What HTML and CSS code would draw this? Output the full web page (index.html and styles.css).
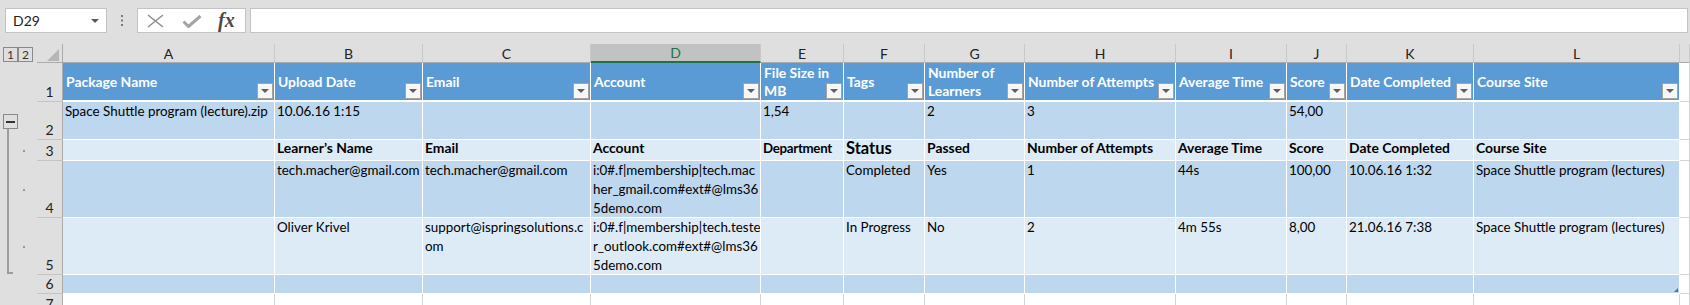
FILE: index.html
```html
<!DOCTYPE html>
<html lang="en">
<head>
    <meta charset="UTF-8">
    <meta name="viewport" content="width=device-width, initial-scale=1.0">
    <title>Learners report</title>
    <link rel="stylesheet" href="styles.css">
</head>
<body>
    <!-- Formula Bar -->
    <div class="formula-bar">
        <div class="name-box">
            <span>D29</span>
            <span class="name-arrow"></span>
        </div>
        <div class="bar-grip">
            <svg width="2" height="11" viewBox="0 0 2 11">
                <rect x="0" y="0" width="2" height="2" fill="#7a7a7a"></rect>
                <rect x="0" y="4.5" width="2" height="2" fill="#7a7a7a"></rect>
                <rect x="0" y="9" width="2" height="2" fill="#7a7a7a"></rect>
            </svg>
        </div>
        <div class="bar-buttons">
            <svg class="icon-cancel" width="17" height="14" viewBox="0 0 17 14" fill="none" stroke="#8f8f8f" stroke-width="1.6">
                <path d="M1 1l15 12M16 1L1 13"></path>
            </svg>
            <svg class="icon-enter" width="20" height="13" viewBox="0 0 20 13" fill="none" stroke="#a3a3a3" stroke-width="3" stroke-linejoin="miter">
                <path d="M1.5 6.5l5 5L18.5 1"></path>
            </svg>
            <span class="icon-fx">fx</span>
        </div>
        <div class="formula-input"></div>
    </div>

    <!-- Sheet -->
    <div class="sheet">
        <div class="row">
            <div class="ol ol-levels">
                <span class="level">1</span>
                <span class="level">2</span>
            </div>
            <div class="corner"><span class="corner-mark"></span></div>
            <div class="ch">A</div>
            <div class="ch">B</div>
            <div class="ch">C</div>
            <div class="ch sel">D</div>
            <div class="ch">E</div>
            <div class="ch">F</div>
            <div class="ch">G</div>
            <div class="ch">H</div>
            <div class="ch">I</div>
            <div class="ch">J</div>
            <div class="ch">K</div>
            <div class="ch">L</div>
            <div class="ch"></div>
        </div>

        <div class="row r-head">
            <div class="ol"></div>
            <div class="rh">1</div>
            <div class="c">Package Name<span class="filter"></span></div>
            <div class="c">Upload Date<span class="filter"></span></div>
            <div class="c">Email<span class="filter"></span></div>
            <div class="c">Account<span class="filter"></span></div>
            <div class="c">File Size in<br>MB<span class="filter"></span></div>
            <div class="c">Tags<span class="filter"></span></div>
            <div class="c">Number of<br>Learners<span class="filter"></span></div>
            <div class="c">Number of Attempts<span class="filter"></span></div>
            <div class="c">Average Time<span class="filter"></span></div>
            <div class="c">Score<span class="filter"></span></div>
            <div class="c">Date Completed<span class="filter"></span></div>
            <div class="c">Course Site<span class="filter"></span></div>
            <div class="c out"></div>
        </div>

        <div class="row r-dark">
            <div class="ol ol-group">
                <span class="collapse"></span>
                <span class="stem"></span>
            </div>
            <div class="rh">2</div>
            <div class="c">Space Shuttle program (lecture).zip</div>
            <div class="c">10.06.16 1:15</div>
            <div class="c"></div>
            <div class="c"></div>
            <div class="c">1,54</div>
            <div class="c"></div>
            <div class="c">2</div>
            <div class="c">3</div>
            <div class="c"></div>
            <div class="c">54,00</div>
            <div class="c"></div>
            <div class="c"></div>
            <div class="c out"></div>
        </div>

        <div class="row r-light r-sub">
            <div class="ol ol-detail"><span class="bracket"></span><span class="dot"></span></div>
            <div class="rh">3</div>
            <div class="c"></div>
            <div class="c">Learner’s Name</div>
            <div class="c">Email</div>
            <div class="c">Account</div>
            <div class="c tight">Department</div>
            <div class="c status">Status</div>
            <div class="c">Passed</div>
            <div class="c">Number of Attempts</div>
            <div class="c">Average Time</div>
            <div class="c">Score</div>
            <div class="c">Date Completed</div>
            <div class="c">Course Site</div>
            <div class="c out"></div>
        </div>

        <div class="row r-dark">
            <div class="ol ol-detail"><span class="bracket"></span><span class="dot"></span></div>
            <div class="rh">4</div>
            <div class="c"></div>
            <div class="c">tech.macher@gmail.com</div>
            <div class="c">tech.macher@gmail.com</div>
            <div class="c">i:0#.f|membership|tech.mac<br>her_gmail.com#ext#@lms36<br>5demo.com</div>
            <div class="c"></div>
            <div class="c">Completed</div>
            <div class="c">Yes</div>
            <div class="c">1</div>
            <div class="c">44s</div>
            <div class="c">100,00</div>
            <div class="c">10.06.16 1:32</div>
            <div class="c">Space Shuttle program (lectures)</div>
            <div class="c out"></div>
        </div>

        <div class="row r-light">
            <div class="ol ol-detail"><span class="bracket bracket-end"></span><span class="dot"></span></div>
            <div class="rh">5</div>
            <div class="c"></div>
            <div class="c">Oliver Krivel</div>
            <div class="c">support@ispringsolutions.c<br>om</div>
            <div class="c">i:0#.f|membership|tech.teste<br>r_outlook.com#ext#@lms36<br>5demo.com</div>
            <div class="c"></div>
            <div class="c">In Progress</div>
            <div class="c">No</div>
            <div class="c">2</div>
            <div class="c">4m 55s</div>
            <div class="c">8,00</div>
            <div class="c">21.06.16 7:38</div>
            <div class="c">Space Shuttle program (lectures)</div>
            <div class="c out"></div>
        </div>

        <div class="row r-dark">
            <div class="ol"></div>
            <div class="rh">6</div>
            <div class="c"></div>
            <div class="c"></div>
            <div class="c"></div>
            <div class="c"></div>
            <div class="c"></div>
            <div class="c"></div>
            <div class="c"></div>
            <div class="c"></div>
            <div class="c"></div>
            <div class="c"></div>
            <div class="c"></div>
            <div class="c table-end"></div>
            <div class="c out"></div>
        </div>

        <div class="row">
            <div class="ol"></div>
            <div class="rh">7</div>
            <div class="c out"></div>
            <div class="c out"></div>
            <div class="c out"></div>
            <div class="c out"></div>
            <div class="c out"></div>
            <div class="c out"></div>
            <div class="c out"></div>
            <div class="c out"></div>
            <div class="c out"></div>
            <div class="c out"></div>
            <div class="c out"></div>
            <div class="c out"></div>
            <div class="c out"></div>
        </div>
    </div>
</body>
</html>
```

FILE: styles.css
```css
* {
    margin: 0;
    padding: 0;
    box-sizing: border-box;
}

body {
    width: 1690px;
    height: 305px;
    overflow: hidden;
    background-color: #dfdfdf;
    font-family: Lato, "Open Sans", sans-serif;
    color: #000;
}

/* Formula Bar */
.formula-bar {
    height: 44px;
    display: flex;
    align-items: flex-start;
    padding: 8px 2px 0 5px;
}

.name-box {
    width: 102px;
    height: 25px;
    background-color: #fff;
    border: 1px solid #c3c3c3;
    display: flex;
    align-items: center;
    justify-content: space-between;
    padding: 0 7px 0 7px;
    font-size: 14px;
    color: #222;
}

.name-arrow {
    border-left: 4px solid transparent;
    border-right: 4px solid transparent;
    border-top: 4px solid #5a5a5a;
}

.bar-grip {
    width: 30px;
    height: 25px;
    display: flex;
    align-items: center;
    justify-content: center;
}

.bar-buttons {
    width: 109px;
    height: 25px;
    background-color: #fff;
    border: 1px solid #c3c3c3;
    display: flex;
    align-items: center;
}

.icon-cancel {
    margin-left: 9px;
}

.icon-enter {
    margin-left: 18px;
    margin-top: 2px;
}

.icon-fx {
    margin-left: 16px;
    font-family: "Liberation Serif", serif;
    font-style: italic;
    font-weight: 700;
    font-size: 20px;
    color: #4a4a4a;
    line-height: 1;
    margin-top: -2px;
}

.formula-input {
    flex: 1;
    height: 25px;
    margin-left: 4px;
    background-color: #fff;
    border: 1px solid #c3c3c3;
}

/* Sheet grid */
.sheet {
    display: grid;
    grid-template-columns: 37px 26px 212px 148px 168px 170px 83px 81px 100px 151px 111px 60px 127px 206px 1fr;
    grid-template-rows: 19px 39px 38px 21px 57px 57px 19px 20px;
}

.row {
    display: contents;
}

/* Outline gutter */
.ol {
    display: flex;
}

.ol-levels {
    padding: 3px 0 0 3px;
}

.level {
    width: 15px;
    height: 15px;
    border: 1px solid #8a8a8a;
    font-size: 12px;
    line-height: 13px;
    text-align: center;
    color: #333;
}

.ol-group {
    flex-direction: column;
    padding-top: 12px;
}

.collapse {
    width: 15px;
    height: 15px;
    margin-left: 3px;
    border: 1px solid #8a8a8a;
    display: flex;
    align-items: center;
    justify-content: center;
}

.collapse::before {
    content: "";
    width: 9px;
    height: 2px;
    background-color: #333;
}

.stem {
    flex: 1;
    margin-left: 7px;
    border-left: 2px solid #9d9d9d;
}

.ol-detail {
    align-items: center;
}

.bracket {
    align-self: stretch;
    width: 6px;
    margin-left: 7px;
    border-left: 2px solid #9d9d9d;
}

.bracket-end {
    border-bottom: 2px solid #9d9d9d;
    margin-bottom: 1px;
}

.dot {
    width: 2px;
    height: 2px;
    margin-left: 10px;
    background-color: #9a9a9a;
}

/* Headers */
.corner {
    border-right: 1px solid #ababab;
    border-bottom: 1px solid #ababab;
    display: flex;
    align-items: flex-end;
    justify-content: flex-end;
    padding: 0 3px 1px 0;
}

.corner-mark {
    border-left: 12px solid transparent;
    border-bottom: 12px solid #b6b6b6;
}

.ch {
    border-right: 1px solid #c9c9c9;
    border-bottom: 1px solid #ababab;
    display: flex;
    align-items: center;
    justify-content: center;
    font-size: 14px;
    color: #222;
}

.ch.sel {
    background-color: #c2c2c2;
    color: #217346;
    border-bottom: 2px solid #217346;
}

.rh {
    border-right: 1px solid #ababab;
    border-bottom: 1px solid #c4c4c4;
    display: flex;
    align-items: flex-end;
    justify-content: center;
    padding-bottom: 1px;
    font-size: 14px;
    line-height: 16px;
    color: #222;
}

/* Cells */
.c {
    position: relative;
    border-right: 1px solid #fff;
    border-bottom: 1px solid #fff;
    padding: 0 2px;
    font-size: 13.4px;
    line-height: 19px;
    white-space: nowrap;
    overflow: hidden;
}

.c.out {
    background-color: #fff;
    border-color: #d4d4d4;
}

.r-head .c {
    background-color: #5b9bd5;
    color: #fff;
    font-weight: 700;
    font-size: 13.9px;
    line-height: 18px;
    border-bottom-width: 2px;
    padding: 0 3px;
    display: flex;
    flex-direction: column;
    justify-content: center;
}

.r-head .c.out {
    background-color: #fff;
    border-bottom-width: 1px;
}

.r-dark .c {
    background-color: #bdd7ee;
}

.r-light .c {
    background-color: #ddebf7;
}

.r-dark .c.out,
.r-light .c.out {
    background-color: #fff;
}

.r-sub .c {
    font-weight: 700;
    font-size: 13.9px;
    line-height: 16px;
}

.r-sub .c.status {
    font-size: 16.5px;
}

.r-sub .c.tight {
    font-size: 13.3px;
    letter-spacing: -0.3px;
    padding-right: 0;
    overflow: visible;
}

.filter {
    position: absolute;
    right: 1px;
    bottom: 1px;
    width: 16px;
    height: 16px;
    background-color: #f7f7f7;
    border: 1px solid #a3a3a3;
    display: flex;
    align-items: center;
    justify-content: center;
}

.filter::after {
    content: "";
    border-left: 4px solid transparent;
    border-right: 4px solid transparent;
    border-top: 4px solid #5f5f5f;
}

.table-end::after {
    content: "";
    position: absolute;
    right: 1px;
    bottom: 1px;
    border-left: 4px solid transparent;
    border-bottom: 4px solid #4a6cc0;
}
```
